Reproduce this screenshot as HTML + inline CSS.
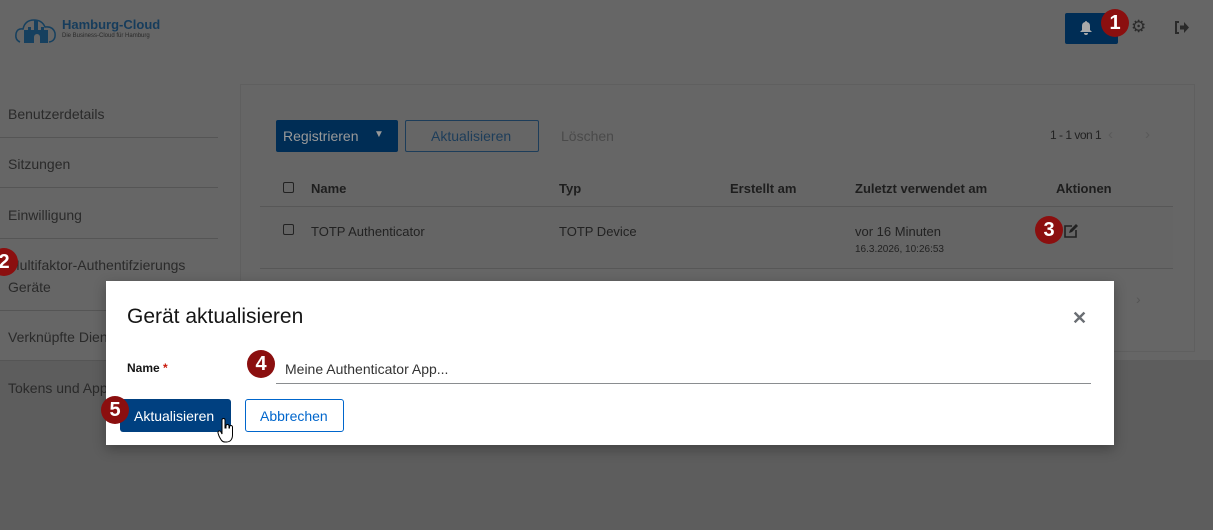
<!DOCTYPE html>
<html><head><meta charset="utf-8"><style>
*{box-sizing:border-box;margin:0;padding:0}
body{width:1213px;height:530px;overflow:hidden;background:#5d5d5d;font-family:"Liberation Sans",sans-serif;position:relative}
.a{position:absolute}
.t{position:absolute;white-space:nowrap}
.badge{position:absolute;width:28px;height:28px;border-radius:50%;background:#8b0f0f;color:#fff;font:bold 20px/28px "Liberation Sans",sans-serif;text-align:center}
.side{color:#2a2a2a;font-size:14px}
.hr{position:absolute;left:0;width:218px;height:1px;background:#555}
</style></head><body>
<div class="a" style="left:0;top:0;width:1213px;height:360px;background:#666"></div>
<div class="a" style="left:240px;top:84px;width:955px;height:268px;background:#666;border:1px solid #5f5f5f"></div>
<!-- logo -->
<svg class="a" style="left:14px;top:12px" width="44" height="34" viewBox="0 0 44 34"><path d="M6 30 Q1 28 2 22 Q3 16 9 17 Q11 8 20 8 Q28 8 31 15 Q39 14 41 21 Q42 29 35 30" fill="none" stroke="#16405f" stroke-width="1.5"/><path d="M10 31V18h4v-3h3v3h3V8h4v10h3v-3h3v3h4v13h-8v-6a3 3 0 0 0-6 0v6z" fill="#16405f"/></svg>
<div class="t" style="left:62px;top:17px;color:#163c5c;font-size:13px;font-weight:bold">Hamburg-Cloud</div>
<div class="t" style="left:62px;top:33px;color:#2a2a2a;font-size:6px">Die Business-Cloud für Hamburg</div>
<!-- header right -->
<div class="a" style="left:1065px;top:13px;width:53px;height:31px;background:#002d55;border-radius:2px"></div>
<svg class="a" style="left:1079px;top:20px" width="14" height="15" viewBox="0 0 14 15"><path d="M7 1a1 1 0 0 1 1 1 4 4 0 0 1 3 4v4l2 2H1l2-2V6a4 4 0 0 1 3-4 1 1 0 0 1 1-1zM5 13h4a2 2 0 0 1-4 0z" fill="#aaa"/></svg>
<div class="badge" style="left:1101px;top:9px">1</div>
<div class="t" style="left:1131px;top:17px;color:#2a2a2a;font-size:17px">⚙</div>
<svg class="a" style="left:1174px;top:21px" width="16" height="13" viewBox="0 0 16 13"><path d="M5 1H2v11h3" fill="none" stroke="#2a2a2a" stroke-width="2"/><path d="M6 4.5h4V1l5 5.5-5 5.5V8.5H6z" fill="#2a2a2a"/></svg>
<!-- sidebar -->
<div class="t side" style="left:8px;top:106px">Benutzerdetails</div><div class="hr" style="top:137px"></div>
<div class="t side" style="left:8px;top:156px">Sitzungen</div><div class="hr" style="top:187px"></div>
<div class="t side" style="left:8px;top:207px">Einwilligung</div><div class="hr" style="top:238px"></div>
<div class="t side" style="left:8px;top:257px">Multifaktor-Authentifzierungs</div>
<div class="t side" style="left:8px;top:279px">Geräte</div>
<div class="badge" style="left:-10px;top:248px">2</div>
<div class="hr" style="top:310px"></div>
<div class="t side" style="left:8px;top:329px">Verknüpfte Dienste</div><div class="hr" style="top:360px"></div>
<div class="t side" style="left:8px;top:380px">Tokens und Apps</div>
<!-- toolbar -->
<div class="a" style="left:276px;top:120px;width:122px;height:32px;background:#002d55;border-radius:2px"></div>
<div class="t" style="left:283px;top:128px;color:#999;font-size:14px">Registrieren</div>
<div class="t" style="left:374px;top:129px;color:#999;font-size:10px">▼</div>
<div class="a" style="left:405px;top:120px;width:134px;height:32px;border:1px solid #1d3d5a;border-radius:2px"></div>
<div class="t" style="left:431px;top:128px;color:#1d3d5a;font-size:14px">Aktualisieren</div>
<div class="t" style="left:561px;top:128px;color:#4a4a4a;font-size:14px">Löschen</div>
<div class="t" style="left:1050px;top:128px;color:#222;font-size:12px;letter-spacing:-0.5px">1 - 1 von 1</div>
<div class="t" style="left:1108px;top:126px;color:#5a5a5a;font-size:15px">‹</div>
<div class="t" style="left:1145px;top:126px;color:#5a5a5a;font-size:15px">›</div>
<!-- table -->
<div class="a" style="left:283px;top:182px;width:11px;height:11px;border:1px solid #222;border-radius:2px"></div>
<div class="t" style="left:311px;top:181px;color:#1e1e1e;font-size:13px;font-weight:bold">Name</div>
<div class="t" style="left:559px;top:181px;color:#1e1e1e;font-size:13px;font-weight:bold">Typ</div>
<div class="t" style="left:730px;top:181px;color:#1e1e1e;font-size:13px;font-weight:bold">Erstellt am</div>
<div class="t" style="left:855px;top:181px;color:#1e1e1e;font-size:13px;font-weight:bold">Zuletzt verwendet am</div>
<div class="t" style="left:1056px;top:181px;color:#1e1e1e;font-size:13px;font-weight:bold">Aktionen</div>
<div class="a" style="left:260px;top:206px;width:913px;height:63px;border-top:1px solid #575757;border-bottom:1px solid #575757;background:#656565"></div>
<div class="a" style="left:283px;top:224px;width:11px;height:11px;border:1px solid #222;border-radius:2px"></div>
<div class="t" style="left:311px;top:224px;color:#222;font-size:13px">TOTP Authenticator</div>
<div class="t" style="left:559px;top:224px;color:#222;font-size:13px">TOTP Device</div>
<div class="t" style="left:855px;top:224px;color:#222;font-size:13px">vor 16 Minuten</div>
<div class="t" style="left:855px;top:244px;color:#222;font-size:10px">16.3.2026, 10:26:53</div>
<div class="badge" style="left:1035px;top:216px">3</div>
<svg class="a" style="left:1063px;top:223px" width="15" height="15" viewBox="0 0 15 15"><path d="M9 3H2v11h11V7" fill="none" stroke="#222" stroke-width="1.6"/><path d="M6 10l1-3 6-6 2 2-6 6z" fill="#222"/></svg>
<div class="t" style="left:1136px;top:291px;color:#555;font-size:14px">›</div>
<!-- modal -->
<div class="a" style="left:106px;top:281px;width:1008px;height:164px;background:#fff;box-shadow:0 4px 12px rgba(0,0,0,.3)"></div>
<div class="t" style="left:127px;top:305px;color:#151515;font-size:21px">Gerät aktualisieren</div>
<div class="t" style="left:1072px;top:308px;color:#6a6e73;font-size:18px;font-weight:bold">✕</div>
<div class="t" style="left:127px;top:361px;color:#151515;font-size:12px;font-weight:bold">Name <span style="color:#c9190b">*</span></div>
<div class="a" style="left:276px;top:383px;width:815px;height:1px;background:#8a8d90"></div>
<div class="t" style="left:285px;top:361px;color:#333;font-size:14px">Meine Authenticator App...</div>
<div class="badge" style="left:247px;top:350px">4</div>
<div class="a" style="left:120px;top:399px;width:111px;height:33px;background:#004080;border-radius:3px"></div>
<div class="t" style="left:134px;top:408px;color:#fff;font-size:14px">Aktualisieren</div>
<div class="badge" style="left:101px;top:396px">5</div>
<div class="a" style="left:245px;top:399px;width:99px;height:33px;border:1px solid #0066cc;border-radius:3px"></div>
<div class="t" style="left:260px;top:408px;color:#0066cc;font-size:14px">Abbrechen</div>
<svg class="a" style="left:217px;top:418px" width="18" height="26" viewBox="0 0 18 26"><path d="M5 2a1.5 1.5 0 0 1 3 0v8h1V8a1.5 1.5 0 0 1 3 0v2h.5V9a1.5 1.5 0 0 1 3 0v8c0 4-2 7-6 7H8c-3 0-4-2-6-6l-1-3a1.5 1.5 0 0 1 3-1l1 2z" fill="#fff" stroke="#000" stroke-width="1"/></svg>
</body></html>
